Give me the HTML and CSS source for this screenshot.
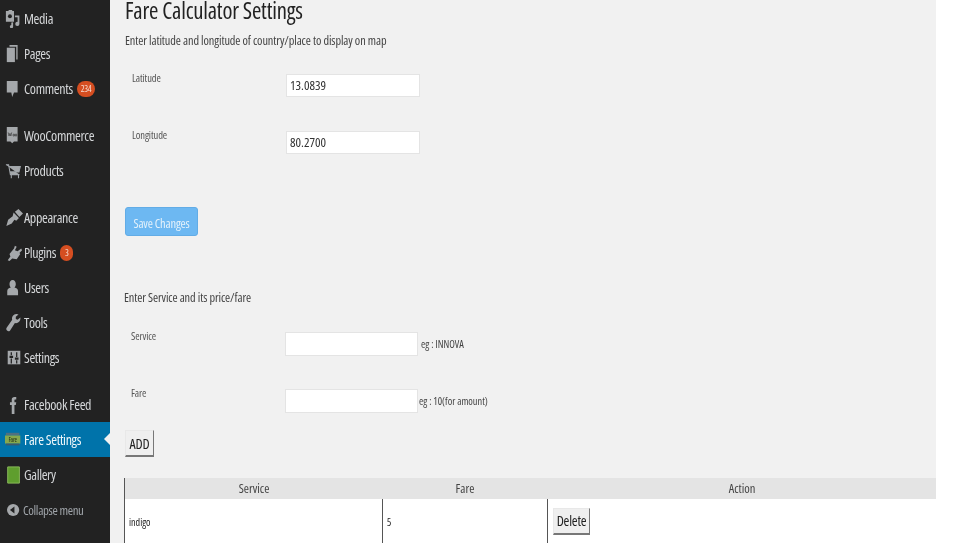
FILE: index.html
```html
<!DOCTYPE html>
<html lang="en">
<head>
<meta charset="utf-8">
<title>Fare Calculator Settings</title>
<link rel="stylesheet" href="styles.css">
</head>
<body>
<div class="page">
  <nav class="sidebar">
    <ul class="menu">
      <li class="item"><svg class="icon" viewBox="0 0 20 20"><path d="M1 1h3V0h4v1h2v12H1z"/><circle cx="5.500" cy="7" r="2.200" fill="#222"/><path d="M11 6h5v9.500a2.300 2.300 0 1 1-2-2.300V8h-3zM7 14l2-.5v5a1.800 1.800 0 1 1-2-1.800z"/></svg><span>Media</span></li>
      <li class="item"><svg class="icon" viewBox="0 0 20 20"><path d="M5 0h9v16h-1.500V2H5z"/><path d="M2 3h9v16H2z"/></svg><span>Pages</span></li>
      <li class="item"><svg class="icon" viewBox="0 0 20 20"><path d="M2 1h12v13H10l-2 5-1-5H2z"/></svg><span>Comments</span><b class="badge wide">234</b></li>
      <li class="item gap"><svg class="icon" viewBox="0 0 20 20"><path d="M2 0h12v16h-4l-2 2-2-2H2z"/><path d="M3.500 6l1 4 1-3 1 3 1-4M9 8h1.500v2H9zM11.500 8H13v2h-1.500z" fill="none" stroke="#333" stroke-width=".7"/></svg><span>WooCommerce</span></li>
      <li class="item"><svg class="icon" viewBox="0 0 20 20" fill="none" stroke="#a0a5aa" stroke-width="1.200"><path d="M1 3h3l2 11h10M4.500 5H17l-1.500 6H5.500"/><path d="M7 14v4M15 14v4"/></svg><span>Products</span></li>
      <li class="item gap"><svg class="icon" viewBox="0 0 20 20"><path d="M11 3l4-3 5 5-4 4zM9.500 4l6 6-3 3-2-1-3 4-6 3 2-7 5-4z"/></svg><span>Appearance</span></li>
      <li class="item"><svg class="icon" viewBox="0 0 20 20"><path d="M11 2l2 1-2 4 3 1 4-3 1 2-3 3 1 1-4 6-5-1-3 3-2-1 3-4-1-3 5-6z"/></svg><span>Plugins</span><b class="badge">3</b></li>
      <li class="item"><svg class="icon" viewBox="0 0 20 20"><path d="M8.500 1c2.200 0 3.500 2 3.500 4.500 0 1.800-.8 3.300-1.500 4 2.500.8 4 1.800 4 4V18H2.500v-4.500c0-2.200 1.500-3.200 4-4C5.800 8.800 5 7.300 5 5.500 5 3 6.300 1 8.500 1z"/></svg><span>Users</span></li>
      <li class="item"><svg class="icon" viewBox="0 0 20 20"><path d="M13 0a5 5 0 0 0-5 6.500L2 15a2.500 2.500 0 0 0 3.500 3.500L11 10a5 5 0 0 0 6-6l-3 2.500-2-1L12 3l3-2.500z"/></svg><span>Tools</span></li>
      <li class="item"><svg class="icon" viewBox="0 0 20 20"><path d="M3 2h14v15H3z"/><path d="M7 3.500V7M7 10.500V16M13 3.500V9M13 12.500V16" stroke="#222" stroke-width="1.400"/><path d="M5 7.500h4v2.500H5zM11 9.500h4V12h-4z" fill="#222"/></svg><span>Settings</span></li>
      <li class="item gap"><svg class="icon" viewBox="0 0 20 20"><path d="M7.500 20V10H5.500V7h2V4c0-2 1-3 3-3h2v3h-1c-1 0-1 .5-1 1v2h2l-.5 3H10.500v10z"/></svg><span>Facebook Feed</span></li>
      <li class="item current"><svg class="icon" viewBox="0 0 20 20"><path d="M1 2h15v3H1z" fill="#51707f"/><path d="M0 5h17v9H0z" fill="#86a84e"/><path d="M1 14h15v2H1z" fill="#3d5a6a"/><text x="8.500" y="12" class="icon-text">Fare</text></svg><span>Fare Settings</span></li>
      <li class="item"><svg class="icon" viewBox="0 0 20 20"><path d="M3 1h13v18H3z" fill="#5f9e2e"/><path d="M3 1h13v18H3z" fill="none" stroke="#8fbf5f"/></svg><span>Gallery</span></li>
      <li class="item collapse"><svg class="icon" viewBox="0 0 20 20"><circle cx="9" cy="10" r="6.800"/><path d="M10.500 6v8L5.500 10z" fill="#222"/></svg><span>Collapse menu</span></li>
    </ul>
  </nav>
  <main class="content">
    <h1 class="title">Fare Calculator Settings</h1>
    <p class="lead">Enter latitude and longitude of country/place to display on map</p>
    <div class="field first"><label class="label">Latitude</label><input class="input" value="13.0839"></div>
    <div class="field second"><label class="label">Longitude</label><input class="input" value="80.2700"></div>
    <button class="save">Save Changes</button>
    <p class="lead service-lead">Enter Service and its price/fare</p>
    <div class="field service"><label class="label">Service</label><input class="input"><span class="hint">eg : INNOVA</span></div>
    <div class="field fare"><label class="label">Fare</label><input class="input"><span class="hint">eg : 10(for amount)</span></div>
    <button class="plain add">ADD</button>
    <table class="table">
      <thead><tr><th class="c1">Service</th><th class="c2">Fare</th><th class="c3">Action</th></tr></thead>
      <tbody><tr><td>indigo</td><td>5</td><td><button class="plain del">Delete</button></td></tr></tbody>
    </table>
  </main>
  <div class="gutter"></div>
</div>
</body>
</html>
```
FILE: styles.css
```css
* { box-sizing: border-box; }
html, body { margin: 0; height: 100%; overflow: hidden; background: #fff; }
body { font-family: "Open Sans", "Liberation Sans", sans-serif; font-stretch: 75%; color: #444; }
.page { display: flex; width: 953px; height: 543px; overflow: hidden; filter: blur(.3px); }
.sidebar { width: 110px; flex: none; background: #222; }
.menu { list-style: none; margin: 0; padding: 1px 0 0; }
.item { position: relative; display: flex; align-items: center; height: 35px; padding-left: 5px; color: #d4d6d8; font-size: 14px; letter-spacing: -.35px; white-space: nowrap; }
.item.gap { margin-top: 12px; }
.icon { width: 18px; height: 18px; margin-right: 1px; fill: #a5a8ab; flex: none; }
.icon-text { font-size: 7px; text-anchor: middle; fill: #24331a; }
.current { background: #0073aa; color: #eef6fa; }
.current::after { content: ""; position: absolute; right: 0; top: 11px; border: 6px solid transparent; border-right-color: #f1f1f1; border-left: 0; }
.collapse { color: #a0a5aa; font-size: 12.800px; }
.collapse .icon { margin-right: 0; }
.badge { display: inline-block; min-width: 13px; height: 16px; margin-left: 4px; padding: 0 3px; border-radius: 8px; background: #d54e21; color: #f5dcd2; font-size: 9px; font-weight: 400; line-height: 16px; text-align: center; letter-spacing: -.3px; }
.badge.wide { padding: 0 4px; }
.content { width: 826px; flex: none; padding: 0 0 0 14px; background: #f1f1f1; }
.gutter { flex: 1; background: #fff; }
.title { margin: 0 0 0 1px; color: #222; font-size: 22.700px; font-weight: 400; line-height: 22px; letter-spacing: -.2px; }
.lead { margin: 11px 0 0 1px; font-size: 12.300px; line-height: 16px; letter-spacing: -.1px; }
.field { display: flex; align-items: flex-start; }
.label { width: 162px; padding: 0 0 0 8px; font-size: 10.500px; line-height: 12px; color: #555; margin-top: -2px; letter-spacing: -.1px; }
.input { width: 134px; height: 23px; padding: 0 3px 2px; border: 1px solid #e4e4e4; background: #fff; font: inherit; font-size: 13px; color: #333; outline: 0; }
.first { margin-top: 25px; }
.second { margin-top: 34px; }
.save { display: block; width: 73px; height: 29px; margin: 53px 0 0 1px; padding: 3px 0 0; border: 1px solid #62ace6; border-radius: 3px; background: #6db8f2; color: #e3f1fb; font: inherit; font-size: 12.500px; letter-spacing: -.2px; }
.service-lead { margin: 54px 0 0; }
.service { margin-top: 26px; }
.service .label, .fare .label { width: 161px; padding-left: 7px; margin-top: -2px; }
.service .input, .fare .input { width: 133px; height: 24px; }
.fare { margin-top: 33px; }
.hint { margin: 5px 0 0 3px; font-size: 10.300px; line-height: 14px; white-space: nowrap; }
.fare .hint { margin-left: 1px; }
.plain { display: block; padding: 0; border: 1px solid #e8e8e8; border-right-color: #777; border-bottom: 2px solid #777; background: #efefef; color: #222; font: inherit; font-size: 14px; letter-spacing: -.2px; }
.add { width: 29px; height: 27px; margin: 17px 0 0 1px; }
.table { display: table; width: 812px; margin-top: 21px; border-collapse: separate; border-spacing: 0; table-layout: fixed; background: #fff; border-left: 1px solid #555; }
.table th { height: 21px; padding: 1px 0 0 1px; background: #e4e4e4; font-size: 12.500px; font-weight: 400; color: #444; line-height: 20px; }
.c1 { width: 257px; }
.c2 { width: 165px; }
.table td { height: 50px; padding: 0 0 0 4px; vertical-align: top; font-size: 10px; line-height: 46px; color: #222; }
.table td + td { border-left: 1px solid #555; }
.del { width: 37px; height: 27px; margin: 9px 0 0 1px; line-height: 1; }
```
